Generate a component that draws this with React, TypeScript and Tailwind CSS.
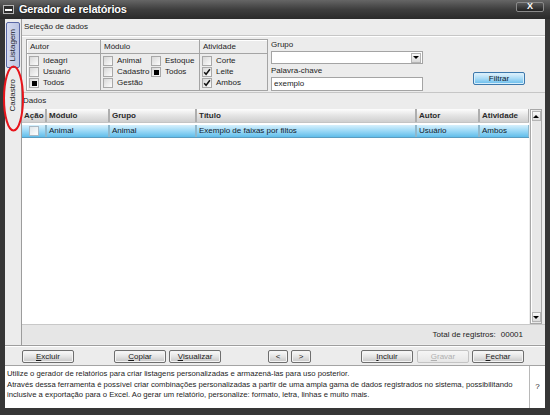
import React from "react";

type CbState = "none" | "check" | "square";

function Cb({ s = "none" }: { s?: CbState }) {
  return (
    <span className="w-[10px] h-[10px] border border-[#a8a8a8] bg-gradient-to-br from-[#d8d8d8] to-[#fcfcfc] flex items-center justify-center shrink-0">
      {s === "check" && (
        <svg width="8" height="8" viewBox="0 0 8 8">
          <path d="M1.2 4.2 L3.1 6.3 L6.9 1.3" stroke="#111" strokeWidth="1.5" fill="none" />
        </svg>
      )}
      {s === "square" && <span className="w-[5px] h-[5px] bg-black" />}
    </span>
  );
}

function CbRow({ label, s }: { label: string; s?: CbState }) {
  return (
    <div className="h-[10px] flex items-center gap-[4px] whitespace-nowrap">
      <Cb s={s} />
      <span>{label}</span>
    </div>
  );
}

function Btn({
  children,
  w = "w-[52px]",
  disabled = false,
  className = "",
}: {
  children: React.ReactNode;
  w?: string;
  disabled?: boolean;
  className?: string;
}) {
  return (
    <div
      className={`${w} h-[13px] rounded-[2px] border flex items-center justify-center shrink-0 ${
        disabled
          ? "border-[#c4c4c4] bg-gradient-to-b from-[#f6f6f6] to-[#e6e6e6] text-[#b0b0b0]"
          : "border-[#6e6e6e] bg-gradient-to-b from-[#fbfbfb] via-[#e4e4e4] to-[#c6c6c6] text-[#1a1a1a] shadow-[inset_0_0_0_1px_#f4f4f4]"
      } ${className}`}
    >
      {children}
    </div>
  );
}

function ArrowBtn({ up }: { up: boolean }) {
  return (
    <div className="w-[9px] h-[10px] mx-auto border border-[#b4b4b4] bg-gradient-to-b from-[#fafafa] to-[#dcdcdc] flex items-center justify-center">
      {up ? (
        <span className="w-0 h-0 border-x-[3px] border-x-transparent border-b-[3px] border-b-black" />
      ) : (
        <span className="w-0 h-0 border-x-[3px] border-x-transparent border-t-[3px] border-t-black" />
      )}
    </div>
  );
}

const cols = [
  { w: "w-[23px]", h: "Ação" },
  { w: "w-[61px]", h: "Módulo" },
  { w: "w-[85px]", h: "Grupo" },
  { w: "w-[218px]", h: "Título" },
  { w: "w-[61px]", h: "Autor" },
  { w: "w-[48px]", h: "Atividade" },
];

const rowVals = ["", "Animal", "Animal", "Exemplo de faixas por filtos", "Usuário", "Ambos"];

export default function App() {
  return (
    <div className="relative w-[550px] h-[415px] overflow-hidden bg-[#363636] flex flex-col font-['Liberation_Sans',Arial,sans-serif] text-[8px] leading-none text-[#1c1c1c]">
      {/* Title bar */}
      <div className="h-[19px] shrink-0 flex items-center bg-gradient-to-b from-[#666] via-[#3e3e3e] to-[#2a2a2a] pl-[3px] pr-[6px]">
        <div className="w-[11px] h-[9px] border border-[#b8b8b8] bg-[#2e2e2e] flex items-center justify-center">
          <span className="w-[7px] h-[2px] bg-white" />
        </div>
        <span className="ml-[5px] text-white font-bold text-[11px] tracking-[-0.2px] [text-shadow:0_0_2px_#000]">
          Gerador de relatórios
        </span>
        <div className="flex-1" />
        <div className="w-[28px] h-[10px] -mt-[6px] border border-[#8a8a8a] rounded-[2px] bg-gradient-to-b from-[#5a5a5a] to-[#222] flex items-center justify-center text-white font-bold text-[9px]">
          X
        </div>
      </div>

      {/* Body */}
      <div className="flex-1 mx-[5px] mb-[7px] bg-[#ececec] flex flex-col">
        <div className="h-[326px] flex">
          {/* Tabs column */}
          <div className="w-[17px] shrink-0 border-r border-[#9c9c9c] flex flex-col items-center">
            <div className="mt-[3px] w-[14px] h-[46px] rounded-[2px] border border-[#5a68a6] bg-gradient-to-r from-[#d4daf0] to-[#bcc5e2] flex items-center justify-center">
              <span className="[writing-mode:vertical-rl] rotate-180 text-[#1c1c2c]">Listagem</span>
            </div>
            <div className="mt-[10px] h-[34px] flex items-center justify-center">
              <span className="[writing-mode:vertical-rl] rotate-180">Cadastro</span>
            </div>
          </div>

          {/* Content */}
          <div className="flex-1 flex flex-col">
            <div className="h-[17px] flex items-center pl-[2px] border-b border-[#c6c6c6]">Seleção de dados</div>
            <div className="h-[57px] flex items-start pl-[4px] pt-[2px] border-t border-white border-b border-b-[#c6c6c6]">
              {/* Group table */}
              <div className="w-[242px] h-[52px] border border-[#a4a4a4] shadow-[inset_1px_1px_0_#fff] flex">
                <div className="w-[74px] border-r border-[#a4a4a4] flex flex-col">
                  <div className="h-[14px] border-b border-[#a4a4a4] flex items-center pl-[3px]">Autor</div>
                  <div className="flex flex-col gap-[1px] pt-[2px] pl-[2px]">
                    <CbRow label="Ideagri" />
                    <CbRow label="Usuário" />
                    <CbRow label="Todos" s="square" />
                  </div>
                </div>
                <div className="w-[99px] border-r border-[#a4a4a4] flex flex-col">
                  <div className="h-[14px] border-b border-[#a4a4a4] flex items-center pl-[3px]">Módulo</div>
                  <div className="flex pt-[2px] pl-[2px]">
                    <div className="w-[48px] flex flex-col gap-[1px]">
                      <CbRow label="Animal" />
                      <CbRow label="Cadastro" />
                      <CbRow label="Gestão" />
                    </div>
                    <div className="flex flex-col gap-[1px]">
                      <CbRow label="Estoque" />
                      <CbRow label="Todos" s="square" />
                    </div>
                  </div>
                </div>
                <div className="flex-1 flex flex-col">
                  <div className="h-[14px] border-b border-[#a4a4a4] flex items-center pl-[3px]">Atividade</div>
                  <div className="flex flex-col gap-[1px] pt-[2px] pl-[2px]">
                    <CbRow label="Corte" />
                    <CbRow label="Leite" s="check" />
                    <CbRow label="Ambos" s="check" />
                  </div>
                </div>
              </div>

              {/* Grupo / Palavra-chave */}
              <div className="ml-[3px] w-[152px] flex flex-col">
                <div className="h-[12px] flex items-center">Grupo</div>
                <div className="h-[13px] border border-[#a4a4a4] bg-white flex items-center justify-end pr-[1px]">
                  <div className="w-[10px] h-[10px] border border-[#b4b4b4] bg-gradient-to-b from-[#fafafa] to-[#d8d8d8] flex items-center justify-center">
                    <span className="w-0 h-0 border-x-[3px] border-x-transparent border-t-[3px] border-t-black" />
                  </div>
                </div>
                <div className="h-[13px] flex items-center">Palavra-chave</div>
                <div className="h-[14px] border border-[#a4a4a4] bg-white flex items-center pl-[2px]">exemplo</div>
              </div>

              {/* Filtrar */}
              <div className="ml-[50px] mt-[33px] w-[52px] h-[13px] rounded-[2px] border border-[#3d78ac] bg-gradient-to-b from-[#e3f3fc] via-[#a9dbf6] to-[#63bbeb] shadow-[inset_0_0_0_1px_#d6eefb] flex items-center justify-center text-[#10202c]">
                Filtrar
              </div>
            </div>

            <div className="h-[16px] flex items-center pl-[1px]">Dados</div>

            {/* Table */}
            <div className="h-[215px] flex">
              <div className="w-[507px] bg-white flex flex-col">
                <div className="h-[14px] flex bg-[#aeaeae] border-b border-[#c4c4c4]">
                  {cols.map((c, i) => (
                    <div
                      key={i}
                      className={`${c.w} ${i > 0 ? "ml-[2px]" : ""} h-[13px] bg-gradient-to-b from-[#fdfdfd] via-[#e4e4e4] to-[#cfcfcf] flex items-center pl-[2px] font-bold text-[#2a2a2a] overflow-hidden whitespace-nowrap`}
                    >
                      {c.h}
                    </div>
                  ))}
                </div>
                <div className="mt-[2px] h-[13px] flex bg-[#8fb8cc] border-b border-[#5a9cc0]">
                  {cols.map((c, i) => (
                    <div
                      key={i}
                      className={`${c.w} ${i > 0 ? "ml-[2px]" : ""} h-[12px] bg-gradient-to-b from-[#d6f0fc] via-[#9ad8f6] to-[#5fbdea] flex items-center ${
                        i === 0 ? "justify-center" : "pl-[2px]"
                      } text-[#10202c] overflow-hidden whitespace-nowrap`}
                    >
                      {i === 0 ? (
                        <span className="w-[10px] h-[10px] border border-[#a8b8c4] bg-gradient-to-br from-[#dfe6ea] to-[#ffffff]" />
                      ) : (
                        rowVals[i]
                      )}
                    </div>
                  ))}
                </div>
              </div>
              {/* Scrollbar */}
              <div className="ml-[1px] w-[12px] border border-[#a8a8a8] bg-[#e8e8e8] shadow-[inset_1px_0_0_#fff] flex flex-col justify-between py-[1px]">
                <ArrowBtn up />
                <ArrowBtn up={false} />
              </div>
            </div>
            <div className="h-[20px] border-t border-[#c8c8c8] bg-[#e6e6e6] flex items-center justify-end pr-[22px]">
              <span>Total de registros:</span>
              <span className="ml-[5px]">00001</span>
            </div>
          </div>
        </div>

        {/* Buttons row */}
        <div className="h-[20px] border-t border-[#9e9e9e] shadow-[inset_0_1px_0_#fff] flex items-start pt-[4px]">
          <Btn className="ml-[17px]"><u>E</u>xcluir</Btn>
          <Btn className="ml-[40px]"><u>C</u>opiar</Btn>
          <Btn className="ml-[3px]"><u>V</u>isualizar</Btn>
          <Btn w="w-[20px]" className="ml-[47px]">&lt;</Btn>
          <Btn w="w-[20px]" className="ml-[3px]">&gt;</Btn>
          <Btn className="ml-[50px]"><u>I</u>ncluir</Btn>
          <Btn className="ml-[4px]" disabled><u>G</u>ravar</Btn>
          <Btn className="ml-[3px]"><u>F</u>echar</Btn>
        </div>

        {/* Help box */}
        <div className="flex-1 border-t border-[#a4a4a4] bg-white flex">
          <div className="flex-1 pl-[2px] pt-[3px] text-[7.7px] leading-[10.5px] whitespace-nowrap overflow-hidden">
            <div>Utilize o gerador de relatórios para criar listagens personalizadas e armazená-las para uso posterior.</div>
            <div>Através dessa ferramenta é possível criar combinações personalizadas a partir de uma ampla gama de dados registrados no sistema, possibilitando</div>
            <div>inclusive a exportação para o Excel. Ao gerar um relatório, personalize: formato, letra, linhas e muito mais.</div>
          </div>
          <div className="w-[16px] border-l border-[#b8b8b8] flex items-center justify-center">?</div>
        </div>
      </div>

      {/* Red annotation ellipse */}
      <svg className="absolute left-[2px] top-[65px]" width="23" height="67" viewBox="0 0 23 67">
        <ellipse cx="11.5" cy="33.5" rx="9.5" ry="32" fill="none" stroke="#e8141b" strokeWidth="2" />
      </svg>
    </div>
  );
}
